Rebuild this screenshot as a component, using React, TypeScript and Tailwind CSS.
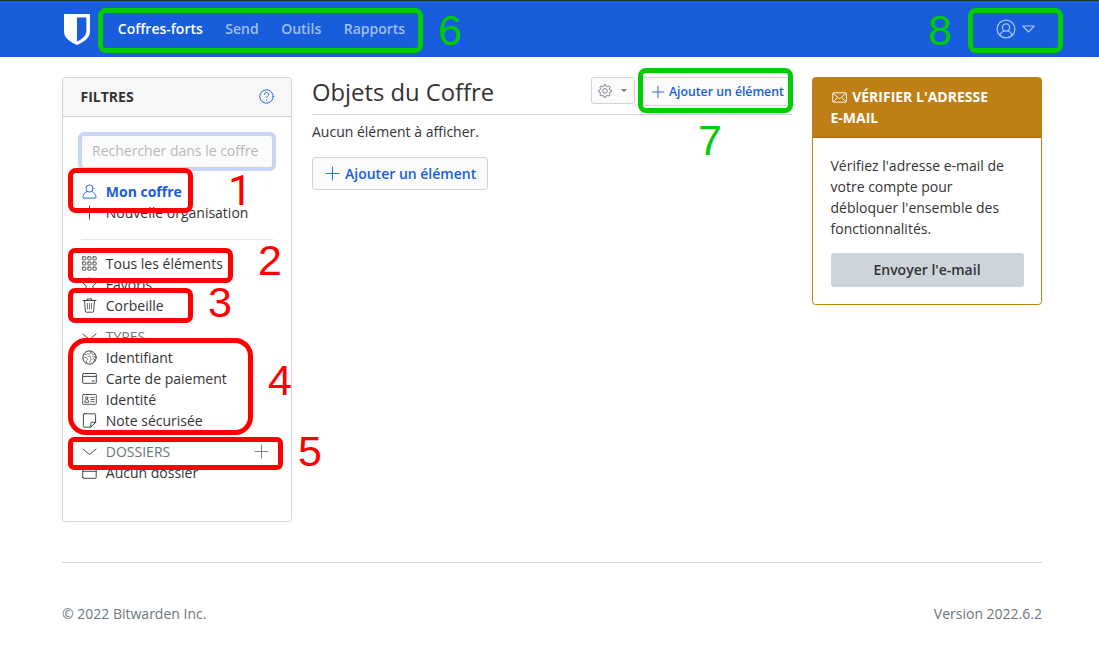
import React from "react";

type IconProps = { className?: string; children?: React.ReactNode };

function Icon({ className = "", children }: IconProps) {
  return (
    <svg
      viewBox="0 0 15 15"
      width="15"
      height="15"
      fill="none"
      stroke="currentColor"
      strokeWidth=".9"
      strokeLinecap="round"
      strokeLinejoin="round"
      className={"shrink-0 " + className}
    >
      {children}
    </svg>
  );
}

const UserIcon = () => (
  <Icon>
    <circle cx="7.5" cy="4.500" r="3.600" />
    <path d="M5 7.500C2.500 8.800 1 10.800 1 13.200c0 .7.3.9.9.9h11.200c.6 0 .9-.2.9-.9 0-2.400-1.500-4.400-4-5.700" />
  </Icon>
);
const PlusIcon = ({ className = "" }: IconProps) => (
  <Icon className={className}>
    <path d="M7.500 1v13M1 7.500h13" />
  </Icon>
);
const GridIcon = () => (
  <Icon>
    {[0.8, 6, 11.2].map((y) =>
      [0.6, 5.8, 11].map((x) => <rect key={`${x}-${y}`} x={x} y={y} width="3.200" height="3" rx=".3" strokeWidth=".8" />),
    )}
  </Icon>
);
const StarIcon = () => (
  <Icon>
    <path d="M7.500 1l2 4.200 4.700.6-3.400 3.200.9 4.700-4.200-2.300-4.200 2.300.9-4.700L.8 5.800l4.700-.6z" />
  </Icon>
);
const TrashIcon = () => (
  <Icon>
    <path d="M1 2.500h13M5.200 2.300V.9h4.600v1.400M2.500 2.700l.9 10.600c.1.600.4.900 1 .9h6.200c.6 0 .9-.3 1-.9l.9-10.600" />
    <path d="M5.400 5.500l.2 5.500M7.500 5.500V11M9.600 5.500L9.400 11" strokeWidth=".7" />
  </Icon>
);
const ChevronIcon = () => (
  <Icon>
    <path d="M1 5l6.500 5.500L14 5" />
  </Icon>
);
const GlobeIcon = () => (
  <Icon>
    <circle cx="7.500" cy="7.500" r="6.700" strokeWidth=".9" />
    <path
      d="M2.200 4.200l2 .5 1.300-1 1.800.6L8.800 3 8 1.200M1 8.300l1.500-1 2 .4 1 1.500-1.200 1.400.3 2.200M6 6.500l1.700-.3 1.300 1-.6 1.300 1 1.200-1.300 1-.3 1.700M10 2l-.2 1.600 1.500 1.200 1.700-.5M10.500 6.500l1.500.5 1.800-.3M10.800 9l1.500-.2.6 1.200-1.700 2"
      strokeWidth=".6"
    />
  </Icon>
);
const CardIcon = () => (
  <Icon>
    <rect x=".7" y="2.500" width="13.600" height="9.800" rx=".8" strokeWidth=".9" />
    <path d="M1 5.400h13M10 10h2.200" strokeWidth=".9" />
  </Icon>
);
const IdentityIcon = () => (
  <Icon>
    <rect x=".7" y="2.500" width="13.600" height="9.800" rx=".6" strokeWidth=".8" />
    <circle cx="4.700" cy="6" r="1.200" strokeWidth=".8" />
    <path d="M2.700 9.900c0-1.500.8-2.300 2-2.300s2 .8 2 2.300zM9 5.400h3.200M9 7.500h3.200M9 9.600h3.200" strokeWidth=".8" />
  </Icon>
);
const NoteIcon = () => (
  <Icon>
    <path d="M2.200.8h10.600c.5 0 .8.3.8.8v7.700l-4.700 4.900H2.200c-.5 0-.8-.3-.8-.8V1.600c0-.5.3-.8.8-.8zM8.900 14v-3.900c0-.5.3-.8.8-.8h3.700" />
  </Icon>
);
const FolderIcon = () => (
  <Icon>
    <path d="M.8 12.500V3.200c0-.5.3-.8.8-.8h3.600l1.300 1.400h6.900c.5 0 .8.3.8.8v7.900c0 .5-.3.8-.8.8H1.600c-.5 0-.8-.3-.8-.8zM1 6.300h13" strokeWidth=".9" />
  </Icon>
);
const MailIcon = () => (
  <svg viewBox="0 0 15 15" width="15" height="15" fill="none" stroke="currentColor" strokeWidth=".9" strokeLinejoin="round" className="ml-px mr-[2px] inline-block align-[-3px]">
    <rect x=".7" y="2.800" width="13.600" height="9.400" rx=".8" />
    <path d="M1 3.300l5.600 4.800c.6.400 1.200.4 1.800 0L14 3.300M1 11.900l4.500-4.400M14 11.900L9.500 7.500" />
  </svg>
);
const GearIcon = () => (
  <svg viewBox="0 0 14 14" width="14" height="14" fill="none" stroke="currentColor" strokeWidth=".9" strokeLinejoin="round">
    <circle cx="7" cy="7" r="2.300" />
    <path d="M5.800 2.100L6.200.7h1.600l.4 1.400 1.300.6 1.400-.8 1.200 1.300-.7 1.300.4 1.200 1.500.4v1.800l-1.500.4-.4 1.200.7 1.300-1.200 1.300-1.400-.8-1.300.6-.4 1.400H6.200l-.4-1.400-1.300-.6-1.400.8-1.200-1.300.7-1.300-.4-1.200L.7 7.900V6.100l1.500-.4.4-1.200-.7-1.300 1.200-1.300 1.400.8z" />
  </svg>
);

function Row({ icon, children, className = "" }: IconProps & { icon: React.ReactNode }) {
  return (
    <li className={"flex h-[21px] items-center gap-[8.800px] " + className}>
      {icon}
      <span>{children}</span>
    </li>
  );
}

function Header() {
  return (
    <header className="h-[57px] border-t border-[#29292e] bg-[#175ddc]">
      <div className="ml-[62px] flex h-14 w-[980px] items-center text-white">
        <svg viewBox="0 0 26 31" width="26" height="31" className="ml-[2px] shrink-0">
          <path d="M1 0h24c.6 0 1 .4 1 1v16.500C26 24 20 28 13 31 6 28 0 24 0 17.500V1c0-.6.4-1 1-1z" fill="#fff" />
          <path d="M13 3.500h9.400v13.800c0 4.500-4 7.500-9.400 10.300z" fill="#175ddc" />
        </svg>
        <nav className="mb-[2px] ml-[27.800px] flex gap-[22.500px] font-semibold text-white/60">
          <a className="text-white">Coffres-forts</a>
          <a>Send</a>
          <a>Outils</a>
          <a>Rapports</a>
        </nav>
        <div className="ml-auto mr-[7px] flex items-center gap-[6px] text-white/65">
          <svg viewBox="0 0 20 20" width="20" height="20" fill="none" stroke="currentColor" strokeWidth="1.200">
            <circle cx="10" cy="10" r="8.900" />
            <circle cx="10" cy="8.500" r="3.600" />
            <path d="M3.800 16.300c.7-2.300 2.200-3.700 4.300-4.500M16.200 16.300c-.7-2.300-2.200-3.700-4.300-4.500" />
          </svg>
          <svg viewBox="0 0 13 8" width="13" height="8" fill="none" stroke="currentColor" strokeWidth="1.100" strokeLinejoin="round">
            <path d="M.8 1h11.400L6.500 7z" />
          </svg>
        </div>
      </div>
    </header>
  );
}

function Filters() {
  return (
    <aside className="h-[445px] w-[230px] shrink-0 rounded-[3.500px] border border-[#ced4dc]">
      <div className="flex h-[39px] items-center justify-between rounded-t-[3px] border-b border-[#ced4dc] bg-[#f7f7f7] px-[17.500px] pb-px font-bold">
        <span>FILTRES</span>
        <svg viewBox="0 0 15 15" width="15" height="15" fill="none" stroke="#175ddc" strokeWidth=".9" strokeLinecap="round">
          <circle cx="7.500" cy="7.500" r="6.700" />
          <path d="M5.400 5.500c0-1.200.9-2 2.100-2s2.200.8 2.200 1.900c0 1.700-2.100 1.800-2.100 3.300M7.500 11v.3" />
        </svg>
      </div>
      <div className="pl-[18px] pr-[18px] pt-[18px]">
        <input
          placeholder="Rechercher dans le coffre"
          className="block h-[33px] w-full rounded-[3px] border border-[#ced4dc] bg-[#fbfbfb] px-[10px] pb-[2px] text-sm shadow-[0_0_0_3px_#c5d6f6] outline-none placeholder:text-[#b6b8b8]"
        />
        <ul className="mt-[13px] pl-px">
          <Row icon={<UserIcon />} className="font-bold text-[#175ddc]">Mon coffre</Row>
          <Row icon={<PlusIcon />}>Nouvelle organisation</Row>
        </ul>
        <hr className="mt-4 border-black/10" />
        <ul className="mt-[13px] pl-px">
          <Row icon={<GridIcon />}>Tous les éléments</Row>
          <Row icon={<StarIcon />}>Favoris</Row>
          <Row icon={<TrashIcon />}>Corbeille</Row>
        </ul>
        <ul className="mt-[10px] pl-px">
          <Row icon={<span className="text-[#333]"><ChevronIcon /></span>} className="text-[#6c757d]">TYPES</Row>
          <Row icon={<GlobeIcon />}>Identifiant</Row>
          <Row icon={<CardIcon />}>Carte de paiement</Row>
          <Row icon={<IdentityIcon />}>Identité</Row>
          <Row icon={<NoteIcon />}>Note sécurisée</Row>
        </ul>
        <div className="mt-[10px] flex h-[21px] items-center gap-[8.800px] pl-px pr-1 text-[#6c757d]">
          <span className="text-[#333]"><ChevronIcon /></span>
          <span>DOSSIERS</span>
          <PlusIcon className="ml-auto" />
        </div>
        <ul className="pl-px">
          <Row icon={<FolderIcon />}>Aucun dossier</Row>
        </ul>
      </div>
    </aside>
  );
}

function Vault() {
  return (
    <main className="ml-5 w-[480px]">
      <div className="flex h-[38px] items-start border-b border-[#ced4dc]">
        <h1 className="text-[23.800px] leading-[30px]">Objets du Coffre</h1>
        <button className="ml-auto flex h-[27px] w-[44px] items-center justify-between rounded-[3px] border border-[#ced4dc] bg-[#fbfbfb] px-[6px] text-[#6c757d]">
          <GearIcon />
          <span className="mr-[1px] border-x-[3.500px] border-t-[3.500px] border-x-transparent border-t-[#6c757d]" />
        </button>
        <button className="ml-1 flex h-[29px] w-[153px] items-center gap-1 whitespace-nowrap rounded-[3px] border border-[#ced4dc] bg-[#fbfbfb] pl-[11px] text-[12.250px] font-semibold text-[#175ddc]">
          <svg viewBox="0 0 14 14" width="14" height="14" fill="none" stroke="currentColor" strokeWidth=".9">
            <path d="M7 .8v12.400M.8 7h12.400" />
          </svg>
          Ajouter un élément
        </button>
      </div>
      <p className="mt-[6px]">Aucun élément à afficher.</p>
      <button className="mt-[15px] flex h-[33px] w-[176px] items-center gap-[5px] whitespace-nowrap rounded-[3px] border border-[#ced4dc] bg-[#fbfbfb] pl-3 font-semibold text-[#175ddc]">
        <PlusIcon />
        Ajouter un élément
      </button>
    </main>
  );
}

function VerifyEmail() {
  return (
    <aside className="ml-5 h-[228px] w-[230px] shrink-0 rounded-[3.500px] border border-[#bf7e16]">
      <div className="h-[60px] border-b border-[#a66d12] bg-[#bf7e16] px-[17.500px] pt-2 font-bold text-white">
        <MailIcon /> VÉRIFIER L'ADRESSE
        <br />
        E-MAIL
      </div>
      <div className="px-[17.500px] pt-[17px]">
        <p>Vérifiez l'adresse e-mail de votre compte pour débloquer l'ensemble des fonctionnalités.</p>
        <button className="mt-[14px] h-[34px] w-full rounded-[3px] bg-[#ced4dc] pb-[2px] font-semibold">Envoyer l'e-mail</button>
      </div>
    </aside>
  );
}

const frames = [
  "left-[98px] top-[8px] h-[45px] w-[325px] rounded-[8px] border-[#00cc00]",
  "left-[968px] top-[8px] h-[45px] w-[95px] rounded-[8px] border-[#00cc00]",
  "left-[638px] top-[68px] h-[45px] w-[155px] rounded-[8px] border-[#00cc00]",
  "left-[68px] top-[168px] h-[45px] w-[125px] rounded-[8px] border-[#ff0000]",
  "left-[68px] top-[248px] h-[35px] w-[165px] rounded-[7px] border-[#ff0000]",
  "left-[68px] top-[288px] h-[35px] w-[125px] rounded-[7px] border-[#ff0000]",
  "left-[68px] top-[338px] h-[97px] w-[185px] rounded-[18px] border-[#ff0000]",
  "left-[68px] top-[437px] h-[33px] w-[215px] rounded-[6px] border-[#ff0000]",
];

const labels = [
  { n: "1", pos: "left-[228px] top-[169px] font-[Roboto] text-[#ff0000]" },
  { n: "2", pos: "left-[258px] top-[239px] text-[#ff0000]" },
  { n: "3", pos: "left-[208px] top-[281px] text-[#ff0000]" },
  { n: "4", pos: "left-[268px] top-[359px] text-[#ff0000]" },
  { n: "5", pos: "left-[298px] top-[430px] text-[#ff0000]" },
  { n: "6", pos: "left-[438px] top-[9px] text-[#00cc00]" },
  { n: "7", pos: "left-[698px] top-[119px] text-[#00cc00]" },
  { n: "8", pos: "left-[928px] top-[9px] text-[#00cc00]" },
];

function Annotations() {
  return (
    <div className="pointer-events-none absolute inset-0 font-['Liberation_Sans',sans-serif]">
      {frames.map((f) => (
        <div key={f} className={"absolute border-[5px] " + f} />
      ))}
      {labels.map(({ n, pos }) => (
        <span key={n} className={"absolute text-[43px] leading-[43px] " + pos}>{n}</span>
      ))}
    </div>
  );
}

export default function App() {
  return (
    <div className="relative h-[672px] w-[1099px] overflow-hidden bg-white font-['Open_Sans',sans-serif] text-[14px] leading-[21px] text-[#333]">
      <Header />
      <div className="ml-[62px] mt-5 flex w-[980px] items-start">
        <Filters />
        <Vault />
        <VerifyEmail />
      </div>
      <footer className="ml-[62px] mt-10 flex w-[980px] justify-between border-t border-[#ced4dc] pt-10 text-[#6c757d]">
        <span>© 2022 Bitwarden Inc.</span>
        <span>Version 2022.6.2</span>
      </footer>
      <Annotations />
    </div>
  );
}
